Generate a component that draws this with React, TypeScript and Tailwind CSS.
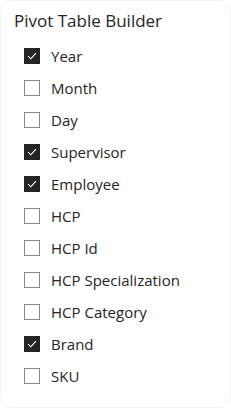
import React from "react";

const items: { label: string; checked: boolean }[] = [
  { label: "Year", checked: true },
  { label: "Month", checked: false },
  { label: "Day", checked: false },
  { label: "Supervisor", checked: true },
  { label: "Employee", checked: true },
  { label: "HCP", checked: false },
  { label: "HCP Id", checked: false },
  { label: "HCP Specialization", checked: false },
  { label: "HCP Category", checked: false },
  { label: "Brand", checked: true },
  { label: "SKU", checked: false },
];

function Box({ checked }: { checked: boolean }) {
  if (checked) {
    return (
      <span className="flex h-4 w-4 shrink-0 items-center justify-center bg-[#242424]">
        <svg width="10" height="8" viewBox="0 0 10 8" fill="none">
          <path d="M1 4.2 L3.8 6.8 L9 1.2" stroke="#ffffff" strokeWidth="1.1" />
        </svg>
      </span>
    );
  }
  return <span className="h-4 w-4 shrink-0 border border-[#8a8a8a] bg-white" />;
}

export default function App() {
  return (
    <div className="h-[408px] w-[231px] bg-white" style={{ fontFamily: '"Open Sans", "Noto Sans", sans-serif' }}>
      <div className="h-full w-full rounded-xl border border-[#f4f4f4] bg-white">
        <div className="pl-[13px] pt-[7px] text-[17px] leading-[26px] text-[#252525]">Pivot Table Builder</div>
        <div className="mt-[6px] flex flex-col pl-[23px]">
          {items.map((it) => (
            <div key={it.label} className="flex h-8 items-center gap-[11px]">
              <Box checked={it.checked} />
              <span className="text-[15px] text-[#252525]">{it.label}</span>
            </div>
          ))}
        </div>
      </div>
    </div>
  );
}
